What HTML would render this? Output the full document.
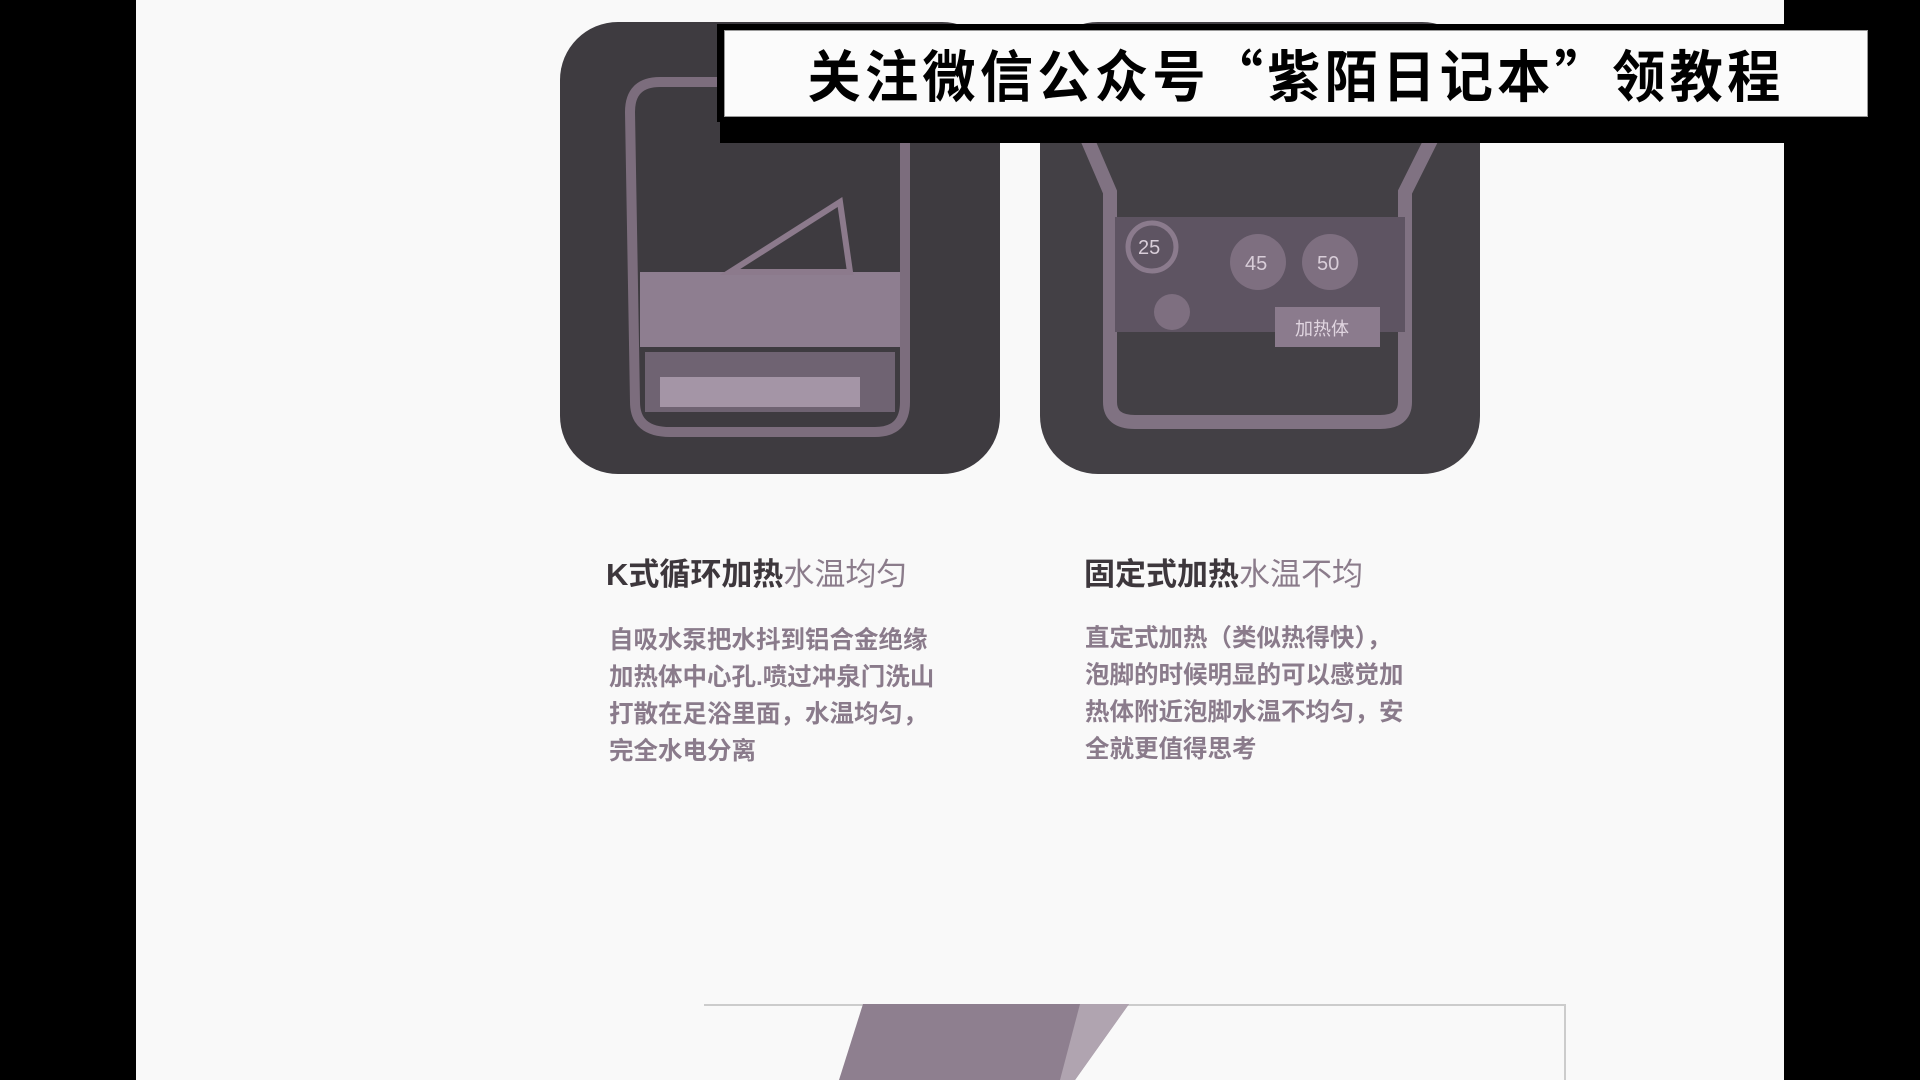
<!DOCTYPE html>
<html><head><meta charset="utf-8"><style>
html,body{margin:0;padding:0;width:1920px;height:1080px;overflow:hidden;background:#f9f9f9;position:relative;font-family:"Liberation Sans","Noto Sans CJK SC",sans-serif}
.abs{position:absolute}
.t{font-size:31px;font-weight:bold;color:#3d373c;white-space:nowrap}
.t span{color:#8b7c8b;font-weight:normal}
.b{font-size:24.5px;line-height:37px;color:#8a7b8b;font-weight:bold;white-space:nowrap}
</style></head><body>
<div class="abs" style="left:0;top:0;width:136px;height:1080px;background:#000"></div>
<div class="abs" style="left:1784px;top:0;width:136px;height:1080px;background:#000"></div>

<svg class="abs" style="left:560px;top:22px" width="440" height="452" viewBox="0 0 440 452">
<rect width="440" height="452" rx="58" fill="#3e3b40"/>
<path d="M70 90 Q70 60 100 60 L320 60 Q345 60 345 90 L345 380 Q345 410 315 410 L110 410 Q75 410 75 380 Z" fill="none" stroke="#8c7a8c" stroke-width="10" opacity=".8"/>
<rect x="80" y="250" width="260" height="75" fill="#8e7e90"/>
<rect x="85" y="330" width="250" height="60" fill="#6f6372"/>
<path d="M170 250 L280 180 L290 250 Z" fill="none" stroke="#8c7a8c" stroke-width="6"/>
<rect x="100" y="355" width="200" height="30" fill="#a495a6"/>
</svg>

<svg class="abs" style="left:1040px;top:22px" width="440" height="452" viewBox="0 0 440 452">
<rect width="440" height="452" rx="58" fill="#434045"/>
<path d="M40 100 L70 170 L70 380 Q70 400 95 400 L340 400 Q365 400 365 380 L365 170 L400 100" fill="none" stroke="#8b7b8d" stroke-width="14" opacity=".85"/>
<rect x="75" y="195" width="290" height="115" fill="#5e5462"/>
<circle cx="112" cy="225" r="24" fill="none" stroke="#8b7b8d" stroke-width="5"/>
<text x="98" y="232" font-size="20" fill="#d8cdd8" font-family="Liberation Sans">25</text>
<circle cx="218" cy="240" r="28" fill="#7e6f80"/>
<text x="205" y="248" font-size="20" fill="#d8cdd8" font-family="Liberation Sans">45</text>
<circle cx="290" cy="240" r="28" fill="#7e6f80"/>
<text x="277" y="248" font-size="20" fill="#d8cdd8" font-family="Liberation Sans">50</text>
<circle cx="132" cy="290" r="18" fill="#7e6f80"/>
<rect x="235" y="285" width="105" height="40" fill="#8b7b8d"/>
<text x="255" y="313" font-size="18" fill="#e0d5e0" font-family="Liberation Sans,Noto Sans CJK SC">加热体</text>
</svg>

<div class="abs" style="left:720px;top:24px;width:1064px;height:119px;background:#000"></div>
<div class="abs" style="left:717px;top:24px;width:1154px;height:98px;background:#000"></div>
<div class="abs" style="left:724px;top:30px;width:1144px;height:87px;background:#fbfbfb;border:1px solid #999;box-sizing:border-box"></div>
<div class="abs" style="left:724px;top:30px;width:1144px;height:87px;line-height:87px;text-align:center;font-size:56px;font-weight:bold;color:#000;letter-spacing:4.5px;font-family:'Noto Sans CJK SC',sans-serif;transform:scaleX(0.95)">关注微信公众号“紫陌日记本”领教程</div>

<div class="abs t" style="left:606px;top:549px">K式循环加热<span>水温均匀</span></div>
<div class="abs t" style="left:1084px;top:549px">固定式加热<span>水温不均</span></div>

<div class="abs b" style="left:609px;top:622px">自吸水泵把水抖到铝合金绝缘<br>加热体中心孔.喷过冲泉门洗山<br>打散在足浴里面，水温均匀，<br>完全水电分离</div>
<div class="abs b" style="left:1085px;top:620px">直定式加热（类似热得快），<br>泡脚的时候明显的可以感觉加<br>热体附近泡脚水温不均匀，安<br>全就更值得思考</div>

<div class="abs" style="left:704px;top:1004px;width:862px;height:2px;background:#ccc"></div>
<div class="abs" style="left:1564px;top:1004px;width:2px;height:76px;background:#ccc"></div>
<svg class="abs" style="left:830px;top:1000px" width="320" height="80"><polygon points="33,4 299,4 245,80 9,80" fill="#8e7f8f"/><polygon points="250,4 299,4 245,80 230,80" fill="#b0a4b0"/></svg>
</body></html>
